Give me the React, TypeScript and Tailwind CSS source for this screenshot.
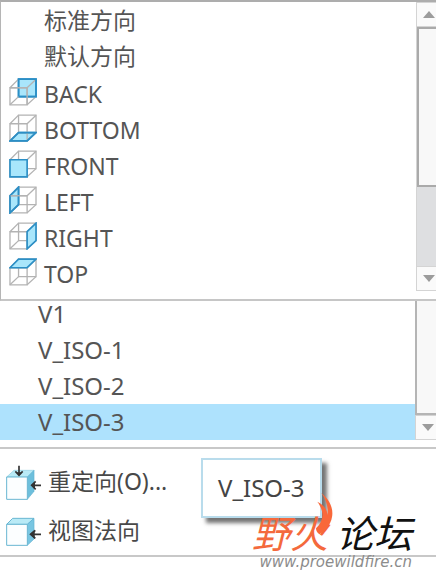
import { useState } from "react"

type Face = "back" | "bottom" | "front" | "left" | "right" | "top"

const FACES: Record<Face, string> = {
  back: "29,3 82,3 82,56 29,56",
  bottom: "3,81 55,81 82,56 29,56",
  front: "3,29 55,29 55,81 3,81",
  left: "3,29 29,3 29,56 3,81",
  right: "55,29 82,3 82,56 55,81",
  top: "3,29 29,3 82,3 55,29",
}

const VIEWS: { label: string; face?: Face }[] = [
  { label: "标准方向" },
  { label: "默认方向" },
  { label: "BACK", face: "back" },
  { label: "BOTTOM", face: "bottom" },
  { label: "FRONT", face: "front" },
  { label: "LEFT", face: "left" },
  { label: "RIGHT", face: "right" },
  { label: "TOP", face: "top" },
]

const SAVED = ["V1", "V_ISO-1", "V_ISO-2", "V_ISO-3"]

function FaceIcon({ face }: { face: Face }) {
  const behind = face === "back" || face === "bottom" || face === "left"
  const highlight = (
    <polygon points={FACES[face]} fill="#a9e6fb" stroke="#2b8fc6" strokeWidth="5" />
  )
  return (
    <svg viewBox="0 0 85 84" className="h-7 w-7 shrink-0" fill="none" aria-hidden="true">
      {behind && highlight}
      <g stroke="#b3b3b3" strokeWidth="4">
        {!behind && <path d="M29 56V3H82V56Z" />}
        {(face === "bottom" || face === "left") && <path d="M29 56V3H82V56Z" />}
        <path d="M3 29H55V81H3Z" />
        <path d="M3 29L29 3M55 29L82 3M55 81L82 56" />
        {face !== "back" && <path d="M3 81L29 56" />}
      </g>
      {behind && <polygon points={FACES[face]} stroke="#2b8fc6" strokeWidth="5" />}
      {face === "left" && <path d="M5 29H55" stroke="#b3b3b3" strokeWidth="4" />}
      {face === "back" && <path d="M3 29H55V81M3 81L29 56" stroke="#b3b3b3" strokeWidth="4" />}
      {!behind && highlight}
    </svg>
  )
}

function ReorientIcon() {
  return (
    <svg viewBox="0 0 108 108" className="h-9 w-9 shrink-0" aria-hidden="true">
      <path d="M2 36L24 16H84L64 36Z" fill="#b9eaf6" stroke="#8fcfe2" strokeWidth="2" />
      <path d="M64 36L84 16V79L64 103Z" fill="#6dbfdc" stroke="#62b2d0" strokeWidth="2" />
      <path d="M2 36H64V103H2Z" fill="#fcfeff" stroke="#69b6d2" strokeWidth="3" />
      <path d="M39 2V30M28 19L39 31L50 19" fill="none" stroke="#333" strokeWidth="5" />
      <path d="M105 61H78M89 49L77 61L89 73" fill="none" stroke="#333" strokeWidth="5" />
      <path d="M39 32L30 22H48ZM75 61L87 51V71Z" fill="#333" />
    </svg>
  )
}

function NormalIcon() {
  return (
    <svg viewBox="0 0 108 90" className="h-[30px] w-9 shrink-0" aria-hidden="true">
      <path d="M2 22L20 4H84L64 22Z" fill="#b9eaf6" stroke="#69b6d2" strokeWidth="3" />
      <path d="M64 22L84 4V66L64 85Z" fill="#79c6e2" stroke="#62b2d0" strokeWidth="2" />
      <path d="M2 22H64V85H2Z" fill="#fcfeff" stroke="#69b6d2" strokeWidth="3" />
      <path d="M105 52H76M88 40L75 52L88 64" fill="none" stroke="#333" strokeWidth="5" />
      <path d="M70 52L86 38V66Z" fill="#333" />
    </svg>
  )
}

function ScrollButton({ direction }: { direction: "up" | "down" }) {
  return (
    <button
      aria-label={direction === "up" ? "Scroll up" : "Scroll down"}
      className="flex h-[25px] w-full shrink-0 items-center justify-center border border-r-0 border-[#d4d4d4] bg-[#fafafa] pl-1"
    >
      <svg viewBox="0 0 12 7" className="h-[7px] w-3" fill="#9c9c9c" aria-hidden="true">
        <path d={direction === "up" ? "M6 0L12 7H0Z" : "M0 0H12L6 7Z"} />
      </svg>
    </button>
  )
}

export default function App() {
  const [selected, setSelected] = useState("V_ISO-3")

  return (
    <main className="relative min-h-screen w-full bg-white pb-5 font-['Noto_Sans','Noto_Sans_CJK_SC',sans-serif] text-[23px] leading-8 text-[#555]">
      <section className="flex border-t-2 border-b-2 border-l border-t-[#adadad] border-b-[#c6c6c6] border-l-[#b5b5b5]">
        <ul className="grow pb-[9px]">
          {VIEWS.map(({ label, face }) => (
            <li key={label}>
              <button onClick={() => setSelected(label)} className="flex h-9 w-full items-center gap-[7px] pl-2 text-left">
                {face ? <FaceIcon face={face} /> : <span className="w-7" />}
                <span className={face ? "pt-1" : ""}>{label}</span>
              </button>
            </li>
          ))}
        </ul>
        <div className="flex w-5 shrink-0 flex-col pb-2">
          <ScrollButton direction="up" />
          <div className="flex grow flex-col border-l border-[#d4d4d4] bg-[#dedfe1]">
            <div className="h-[160px] border-2 border-r-0 border-[#aaa] bg-[#f8f8f8]" />
          </div>
          <ScrollButton direction="down" />
        </div>
      </section>

      <section className="flex">
        <ul className="grow">
          {SAVED.map((name) => (
            <li key={name} className="first:-mt-[5px]">
              <button
                onClick={() => setSelected(name)}
                className={
                  "flex h-9 w-full items-center pl-[38px] text-left text-2xl " + (selected === name ? "bg-[#aee2fd]" : "")
                }
              >
                {name}
              </button>
            </li>
          ))}
        </ul>
        <div className="flex w-[21px] shrink-0 flex-col">
          <div className="grow border-b-2 border-l-2 border-[#b5b5b5] bg-[#f8f8f8]" />
          <ScrollButton direction="down" />
        </div>
      </section>

      <section className="mt-[7px] flex flex-col gap-4 border-t-2 border-b-2 border-[#c8c8c8] pt-4 pb-2 pl-[6px] text-[#484848]">
        <button className="flex h-9 items-center gap-[6px] text-left">
          <ReorientIcon />
          <span className="pb-1">重定向(O)...</span>
        </button>
        <button className="flex h-[30px] items-center gap-[6px] text-left">
          <NormalIcon />
          <span className="pb-1">视图法向</span>
        </button>
      </section>

      <div
        role="tooltip"
        className="absolute top-[458px] left-[201px] border-2 border-[#b9dcec] bg-white px-[15px] py-3 text-2xl leading-8 text-[#444] shadow-[5px_5px_4px_rgba(0,0,0,0.55)]"
      >
        V_ISO-3
      </div>

      <div className="absolute top-[513px] right-6">
        <div className="flex gap-2 text-[38px] leading-10 italic">
          <span className="text-[#f4693c]">野火</span>
          <span className="text-[#111]">论坛</span>
        </div>
        <svg viewBox="0 0 54 126" className="absolute -top-5 left-16 h-[42px] w-[18px]" fill="#f9683a" aria-hidden="true">
          <path d="M16 0C34 14 54 40 48 72C44 96 28 114 10 124C2 118 0 112 0 106C24 84 26 56 4 26C24 36 34 50 34 66C38 42 30 20 16 0Z" />
        </svg>
      </div>
      <a
        href="http://www.proewildfire.cn"
        className="absolute top-[553px] right-6 font-['DejaVu_Sans',sans-serif] text-[15px] leading-[18px] text-[#8c8c8c] italic"
      >
        www.proewildfire.cn
      </a>
    </main>
  )
}
